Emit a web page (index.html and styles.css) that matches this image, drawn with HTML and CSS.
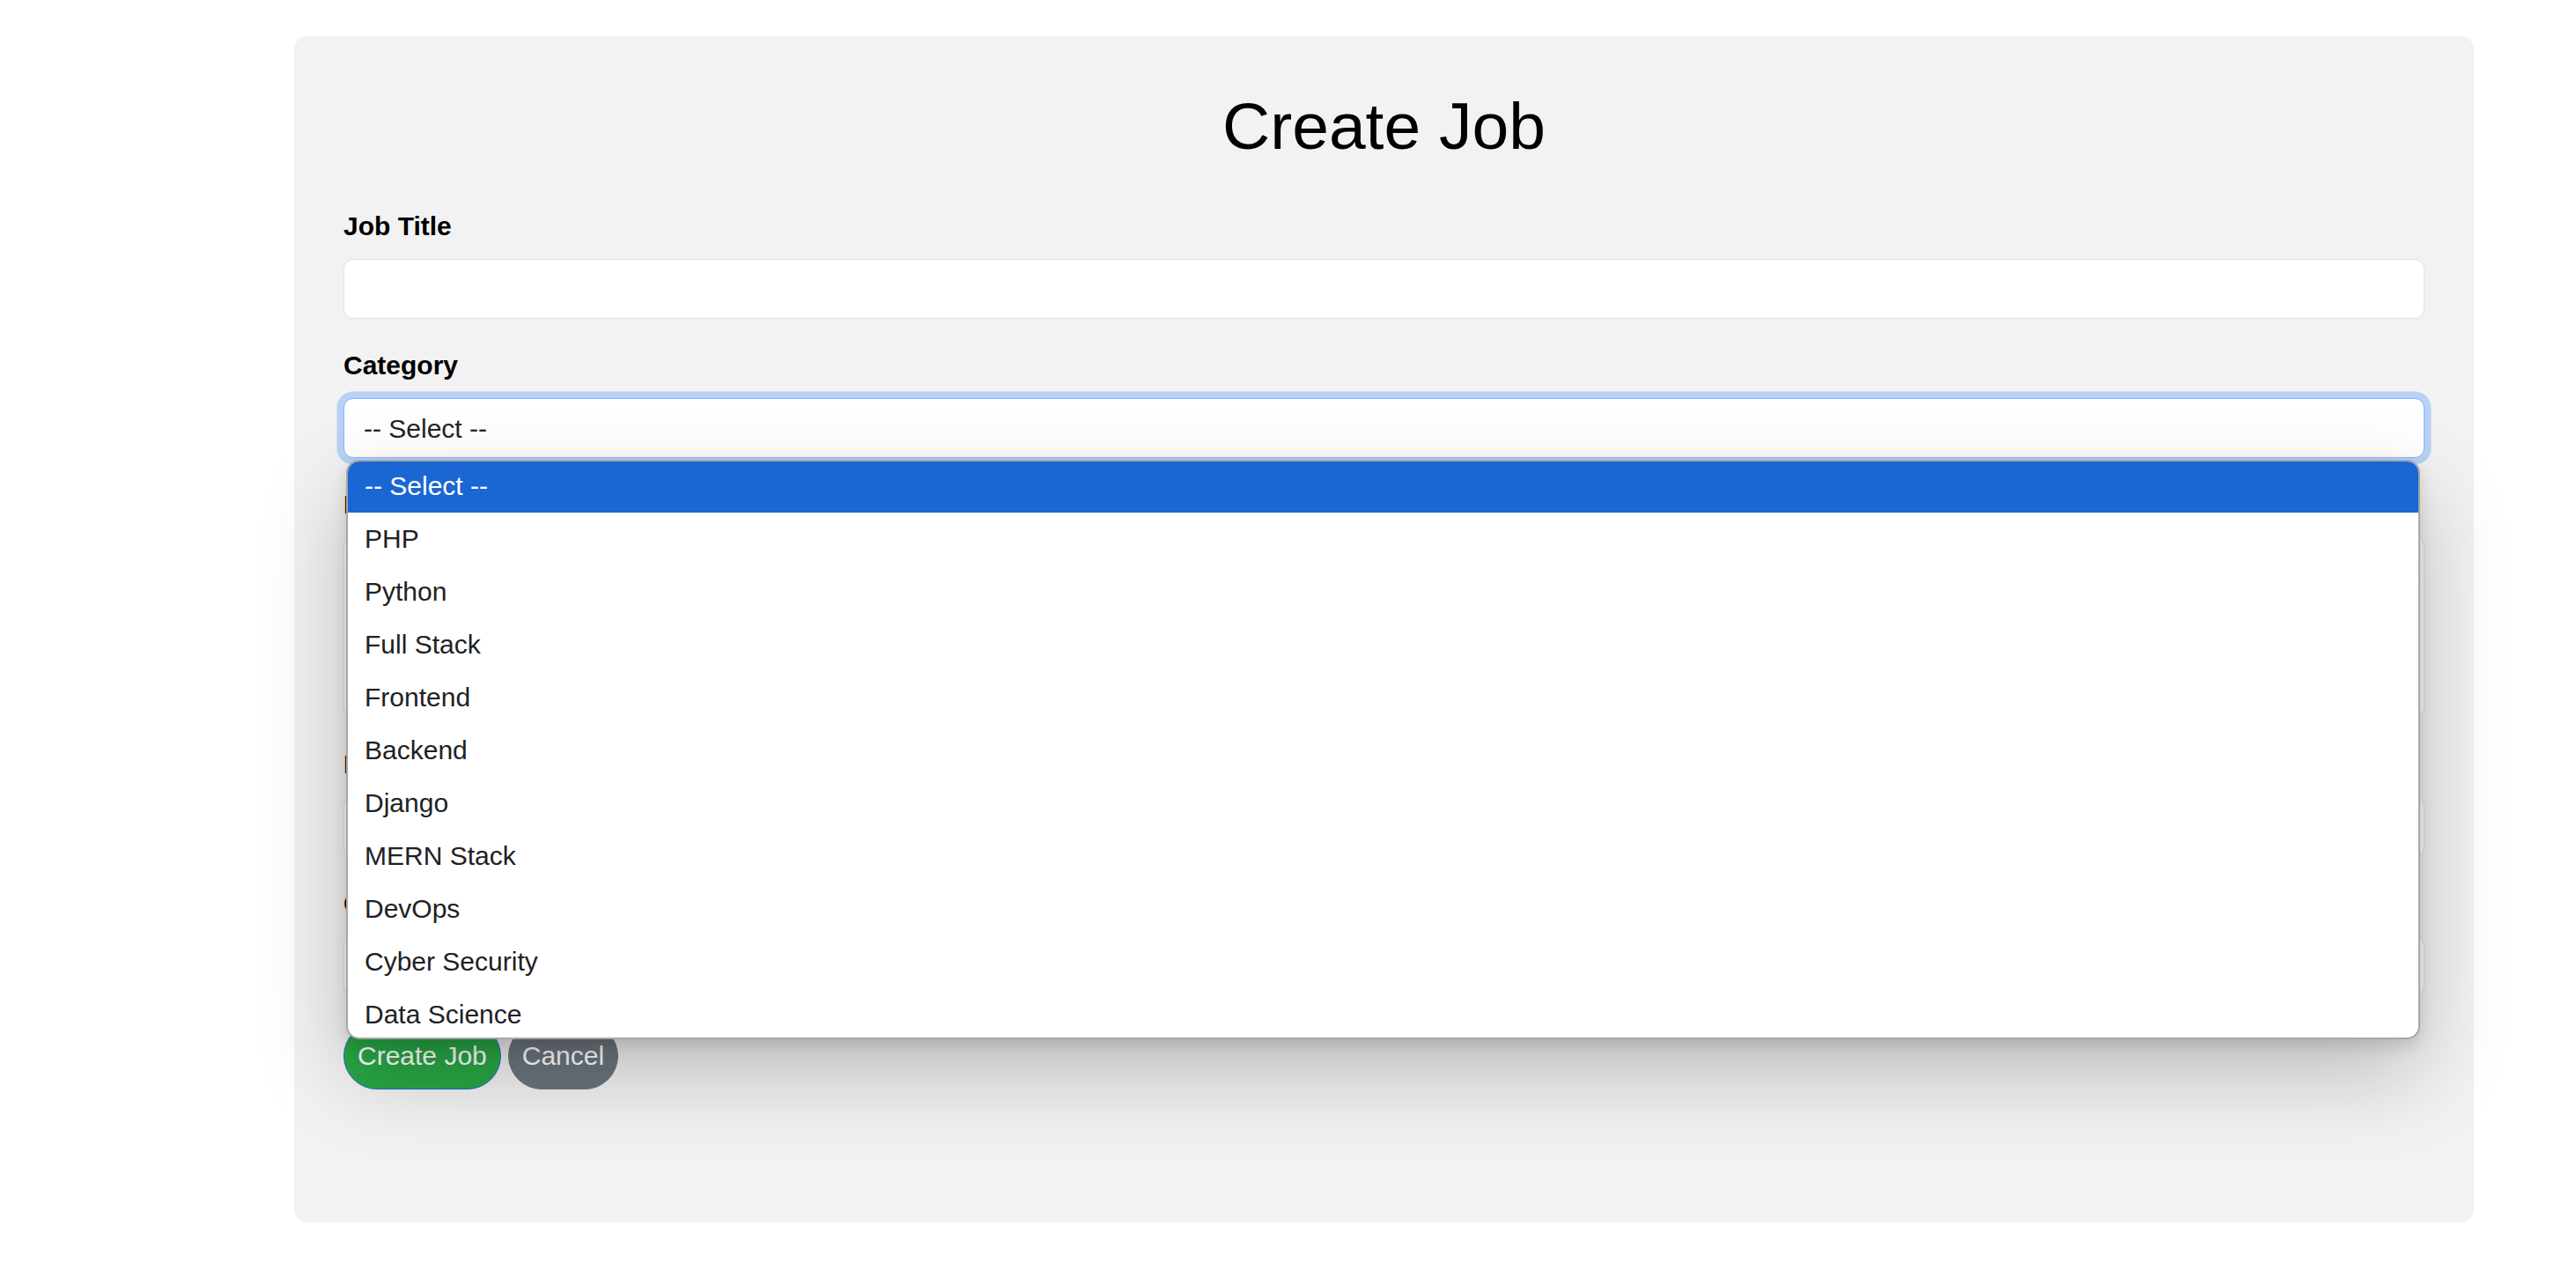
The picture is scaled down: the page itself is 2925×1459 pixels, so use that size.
FILE: index.html
```html
<!DOCTYPE html>
<html lang="en">
<head>
<meta charset="utf-8">
<title>Create Job</title>
<link rel="stylesheet" href="styles.css">
</head>
<body>
<div class="page">
  <div class="card">
    <h1 class="title">Create Job</h1>
    <form class="form">
      <div class="group">
        <label class="label" for="title">Job Title</label>
        <input class="field" id="title" type="text">
      </div>
      <div class="group">
        <label class="label" for="category">Category</label>
        <select class="field select" id="category">
          <option>-- Select --</option>
          <option>PHP</option>
          <option>Python</option>
        </select>
      </div>
      <div class="group">
        <label class="label" for="desc">Description</label>
        <textarea class="field area" id="desc"></textarea>
      </div>
      <div class="group">
        <label class="label" for="loc">Location</label>
        <input class="field" id="loc" type="text">
      </div>
      <div class="group">
        <label class="label" for="comp">Company</label>
        <input class="field" id="comp" type="text">
      </div>
      <div class="actions">
        <button type="button" class="btn btn-success">Create Job</button>
        <button type="button" class="btn btn-secondary">Cancel</button>
      </div>
    </form>

    <ul class="popup">
      <li class="opt selected">-- Select --</li>
      <li class="opt">PHP</li>
      <li class="opt">Python</li>
      <li class="opt">Full Stack</li>
      <li class="opt">Frontend</li>
      <li class="opt">Backend</li>
      <li class="opt">Django</li>
      <li class="opt">MERN Stack</li>
      <li class="opt">DevOps</li>
      <li class="opt">Cyber Security</li>
      <li class="opt">Data Science</li>
    </ul>
  </div>
</div>
</body>
</html>
```

FILE: styles.css
```css
html, body {
  margin: 0;
  padding: 0;
  background: #ffffff;
}

body {
  font-family: "Liberation Sans", Arial, sans-serif;
  color: #212529;
}

.page {
  padding: 41px 116px 0 334px;
}

.card {
  position: relative;
  box-sizing: border-box;
  height: 1347px;
  padding: 57px 56px 56px;
  background: #f2f2f2;
  border-radius: 15px;
}

.title {
  margin: 0 0 46px;
  font-size: 75px;
  line-height: 90px;
  font-weight: 400;
  text-align: center;
  color: #000;
}

.form {
  margin: 0;
}

.group {
  margin-bottom: 30px;
}

.label {
  display: block;
  margin-bottom: 15px;
  font-size: 30px;
  line-height: 45px;
  font-weight: 700;
  color: #000;
}

.field {
  display: block;
  box-sizing: border-box;
  width: 100%;
  height: 68px;
  margin: 0;
  padding: 0 22px;
  border: 1px solid #dee2e6;
  border-radius: 11px;
  background: #fff;
  font-family: "Liberation Sans", Arial, sans-serif;
  font-size: 30px;
  color: #212529;
  outline: none;
}

.select {
  -webkit-appearance: none;
  appearance: none;
  border-color: #86b7fe;
  box-shadow: 0 0 0 7.5px rgba(13, 110, 253, 0.25);
}

.area {
  height: 205px;
  resize: none;
}

.actions {
  display: flex;
  gap: 8px;
  margin-top: 8px;
}

.btn {
  box-sizing: border-box;
  height: 76px;
  padding: 0 15px;
  border: 1px solid transparent;
  border-radius: 38px;
  font-family: "Liberation Sans", Arial, sans-serif;
  font-size: 30px;
  color: #fff;
  cursor: pointer;
}

.btn-success {
  background: #28a745;
  border-color: #2569d8;
}

.btn-secondary {
  background: #6c757d;
  border-color: #6c757d;
}

/* open dropdown list of the Category select */
.popup {
  position: absolute;
  left: 59px;
  top: 481px;
  box-sizing: border-box;
  width: 2355px;
  height: 658px;
  margin: 0;
  padding: 0;
  list-style: none;
  overflow: hidden;
  background: #fff;
  border: 2px solid #a6a6a6;
  border-radius: 15px;
  box-shadow: 0 8px 18px rgba(0, 0, 0, 0.12), 0 40px 100px rgba(0, 0, 0, 0.22);
}

.opt {
  box-sizing: border-box;
  height: 60px;
  padding-left: 19px;
  font-size: 30px;
  line-height: 60px;
  color: #202124;
  white-space: nowrap;
}

.opt:first-child {
  margin-top: -2px;
}

.selected {
  background: #1a67d3;
  color: #fff;
}
```
